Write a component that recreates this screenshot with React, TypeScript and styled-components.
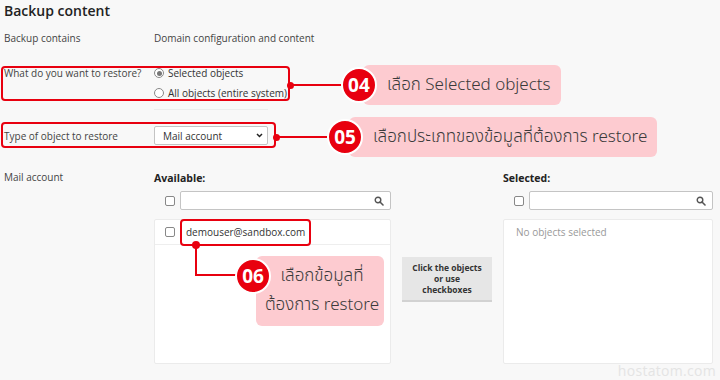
import React from 'react';
import styled, { createGlobalStyle } from 'styled-components';

const GlobalStyle = createGlobalStyle`
  html, body {
    margin: 0;
    padding: 0;
    background: #f8f8f8;
  }
  body {
    font-family: 'Open Sans', 'Noto Sans', sans-serif;
    font-size: 10px;
    color: #444;
  }
  * {
    box-sizing: border-box;
  }
`;

const RED = '#e8000f';
const PINK = '#fdcbd0';
const THAI = "'Noto Sans Thai', 'Noto Sans', 'Open Sans', sans-serif";

const Page = styled.div`
  position: relative;
  width: 720px;
  height: 380px;
  overflow: hidden;
  padding: 1px 0 0 4px;
`;

const Title = styled.h1`
  margin: 0;
  font-size: 14px;
  line-height: 20px;
  font-weight: 600;
  color: #222;
`;

const Row = styled.div<{ $top: number }>`
  display: grid;
  grid-template-columns: 150px auto;
  align-items: start;
  width: fit-content;
  margin-top: ${p => p.$top}px;
  line-height: 16px;
`;

const MarkedRow = styled(Row)<{ $inset: string }>`
  position: relative;
  align-items: center;
  &::after {
    content: '';
    position: absolute;
    inset: ${p => p.$inset};
    border: 2px solid ${RED};
    border-radius: 4px;
    pointer-events: none;
  }
`;

const Label = styled.div<{ $top?: boolean }>`
  color: #444;
  align-self: ${p => (p.$top ? 'start' : 'auto')};
`;

const Value = styled.div`
  color: #444;
`;

const RadioList = styled.div`
  display: flex;
  flex-direction: column;
  gap: 4px;
`;

const RadioItem = styled.label`
  display: flex;
  align-items: center;
  gap: 4px;
  color: #333;
`;

const RadioDot = styled.span<{ $on?: boolean }>`
  width: 10px;
  height: 10px;
  border-radius: 50%;
  border: 1px solid #888;
  background: #fff;
  display: inline-flex;
  align-items: center;
  justify-content: center;
  &::after {
    content: '';
    width: 5px;
    height: 5px;
    border-radius: 50%;
    background: ${p => (p.$on ? '#777' : 'transparent')};
  }
`;

const Divider = styled.div`
  grid-column: 2;
  width: 114px;
  height: 1px;
  background: #ececec;
`;

const Select = styled.div`
  width: 114px;
  height: 19px;
  display: flex;
  align-items: center;
  justify-content: space-between;
  padding: 0 4px 0 8px;
  background: #fff;
  border: 1px solid #c4c4c4;
  border-radius: 2px;
  color: #333;
`;

const Callout = styled.div<{ $left: string; $top: number }>`
  position: absolute;
  left: ${p => p.$left};
  top: ${p => p.$top}px;
  display: flex;
  align-items: center;
  height: 40px;
  z-index: 2;
`;

const Dot = styled.span`
  width: 7px;
  height: 7px;
  border-radius: 50%;
  background: ${RED};
  flex: none;
`;

const Wire = styled.span<{ $w: number }>`
  width: ${p => p.$w}px;
  height: 2px;
  background: ${RED};
  margin-left: -1px;
  flex: none;
`;

const Badge = styled.span`
  position: relative;
  z-index: 1;
  width: 36px;
  height: 36px;
  flex: none;
  border-radius: 50%;
  background: ${RED};
  border: 2px solid #fff;
  color: #fff;
  font-family: 'Open Sans', sans-serif;
  font-weight: 700;
  font-size: 19px;
  display: flex;
  align-items: center;
  justify-content: center;
`;

const Bubble = styled.span`
  height: 40px;
  margin-left: -14px;
  padding: 0 10px 0 24px;
  background: ${PINK};
  border-radius: 6px;
  font-family: ${THAI};
  font-size: 17px;
  font-weight: 300;
  line-height: 40px;
  color: #3a3a3a;
  white-space: nowrap;
`;

const Picker = styled.div`
  display: grid;
  grid-template-columns: 237px 90px 210px;
  column-gap: 11px;
  margin-top: 1px;
`;

const Column = styled.div`
  display: flex;
  flex-direction: column;
`;

const Heading = styled.div`
  font-size: 10.5px;
  font-weight: 700;
  color: #222;
  line-height: 16px;
`;

const SearchRow = styled.div`
  display: flex;
  align-items: center;
  gap: 5px;
  margin-top: 5px;
  padding-left: 11px;
`;

const Check = styled.span`
  width: 10px;
  height: 10px;
  flex: none;
  border: 1px solid #888;
  border-radius: 2px;
  background: #fff;
`;

const Search = styled.div`
  flex: 1;
  height: 19px;
  display: flex;
  align-items: center;
  justify-content: flex-end;
  padding-right: 6px;
  background: #fff;
  border: 1px solid #c4c4c4;
  border-radius: 2px;
`;

const ListBox = styled.div`
  margin-top: 9px;
  height: 145px;
  background: #fff;
  border: 1px solid #ebebeb;
  border-radius: 2px;
`;

const ListItem = styled.div`
  height: 25px;
  display: flex;
  align-items: center;
  gap: 11px;
  padding-left: 10px;
  border-bottom: 1px solid #eee;
  color: #333;
`;

const Marked = styled.span<{ $inset: string }>`
  position: relative;
  display: inline-block;
  line-height: 16px;
  &::after {
    content: '';
    position: absolute;
    inset: ${p => p.$inset};
    border: 2px solid ${RED};
    border-radius: 4px;
    pointer-events: none;
  }
`;

const Empty = styled.div`
  padding: 4px 12px;
  line-height: 16px;
  color: #999;
`;

const ElbowCallout = styled.div`
  position: absolute;
  left: 9px;
  top: calc(100% + 5px);
  display: flex;
  align-items: flex-start;
  z-index: 2;
`;

const Elbow = styled.span`
  position: relative;
  width: 41px;
  height: 31px;
  flex: none;
  border-left: 2px solid ${RED};
  border-bottom: 2px solid ${RED};
  &::before {
    content: '';
    position: absolute;
    left: -5px;
    top: -4px;
    width: 8px;
    height: 8px;
    border-radius: 50%;
    background: ${RED};
  }
`;

const ElbowBadge = styled(Badge)`
  margin-top: 13px;
  margin-left: -1px;
`;

const TallBubble = styled.span`
  width: 128px;
  height: 70px;
  margin-top: 11px;
  margin-left: -15px;
  padding: 6px 4px 0 8px;
  background: ${PINK};
  border-radius: 6px;
  font-family: ${THAI};
  font-size: 17px;
  font-weight: 300;
  line-height: 29px;
  color: #3a3a3a;
  text-align: center;
  white-space: nowrap;
`;

const ActionButton = styled.div`
  margin-top: 87px;
  height: 45px;
  display: flex;
  align-items: center;
  justify-content: center;
  text-align: center;
  background: #e6e6e6;
  border-bottom: 2px solid #d2d2d2;
  font-size: 8.5px;
  line-height: 11px;
  font-weight: 700;
  color: #333;
`;

const Watermark = styled.div`
  position: absolute;
  right: 4px;
  bottom: 0;
  font-size: 14px;
  line-height: 18px;
  color: #e4e4e4;
  letter-spacing: 0.3px;
`;

const SearchIcon = () => (
  <svg width="10" height="10" viewBox="0 0 10 10">
    <circle cx="4" cy="4" r="2.8" fill="none" stroke="#555" strokeWidth="1.4" />
    <line x1="6" y1="6" x2="9" y2="9" stroke="#555" strokeWidth="1.6" strokeLinecap="round" />
  </svg>
);

const Chevron = () => (
  <svg width="7" height="5" viewBox="0 0 7 5">
    <polyline points="1,1 3.5,3.5 6,1" fill="none" stroke="#222" strokeWidth="1.5" />
  </svg>
);

const PickerColumn = ({ title, children }: { title: string; children: React.ReactNode }) => (
  <Column>
    <Heading>{title}</Heading>
    <SearchRow>
      <Check />
      <Search>
        <SearchIcon />
      </Search>
    </SearchRow>
    <ListBox>{children}</ListBox>
  </Column>
);

const App = () => {
  return (
    <Page>
      <GlobalStyle />
      <Title>Backup content</Title>

      <Row $top={9}>
        <Label>Backup contains</Label>
        <Value>Domain configuration and content</Value>
      </Row>

      <MarkedRow $top={19} $inset="1px -3px 0 -3px">
        <Label $top>What do you want to restore?</Label>
        <RadioList>
          <RadioItem>
            <RadioDot $on />
            Selected objects
          </RadioItem>
          <RadioItem>
            <RadioDot />
            All objects (entire system)
          </RadioItem>
        </RadioList>
        <Callout $left="100%" $top={0}>
          <Dot />
          <Wire $w={48} />
          <Badge>04</Badge>
          <Bubble>เลือก Selected objects</Bubble>
        </Callout>
      </MarkedRow>

      <Row $top={8}>
        <Divider />
      </Row>

      <MarkedRow $top={16} $inset="-4px -8px -3px -3px">
        <Label>Type of object to restore</Label>
        <Select>
          Mail account
          <Chevron />
        </Select>
        <Callout $left="calc(100% + 5px)" $top={-9}>
          <Dot />
          <Wire $w={48} />
          <Badge>05</Badge>
          <Bubble>เลือกประเภทของข้อมูลที่ต้องการ restore</Bubble>
        </Callout>
      </MarkedRow>

      <Row $top={24}>
        <Label>Mail account</Label>
        <Picker>
          <PickerColumn title="Available:">
            <ListItem>
              <Check />
              <Marked $inset="-5px -6px -6px -6px">
                demouser@sandbox.com
                <ElbowCallout>
                  <Elbow />
                  <ElbowBadge>06</ElbowBadge>
                  <TallBubble>
                    เลือกข้อมูลที่
                    <br />
                    ต้องการ restore
                  </TallBubble>
                </ElbowCallout>
              </Marked>
            </ListItem>
          </PickerColumn>
          <Column>
            <ActionButton>
              Click the objects
              <br />
              or use
              <br />
              checkboxes
            </ActionButton>
          </Column>
          <PickerColumn title="Selected:">
            <Empty>No objects selected</Empty>
          </PickerColumn>
        </Picker>
      </Row>

      <Watermark>hostatom.com</Watermark>
    </Page>
  );
};

export default App;
